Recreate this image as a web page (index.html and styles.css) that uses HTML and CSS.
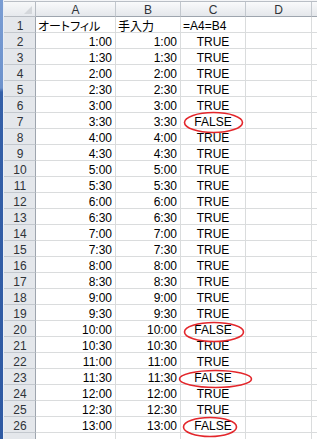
FILE: index.html
```html
<!DOCTYPE html>
<html lang="ja">
<head>
<meta charset="utf-8">
<link rel="stylesheet" href="styles.css">
</head>
<body>
<div class="window">
  <div class="frame"></div>
  <div class="sheet-area">
    <div class="topband"></div>
    <div class="sheet">
      <div class="corner"><span class="tri"></span></div>
      <div class="colhead">A</div>
      <div class="colhead">B</div>
      <div class="colhead">C</div>
      <div class="colhead">D</div>
      <div class="colhead last"></div>

      <div class="rowhead">1</div><div class="cell jp">オートフィル</div><div class="cell jp">手入力</div><div class="cell left">=A4=B4</div><div class="cell"></div><div class="cell"></div>
      <div class="rowhead">2</div><div class="cell num">1:00</div><div class="cell num">1:00</div><div class="cell mid">TRUE</div><div class="cell"></div><div class="cell"></div>
      <div class="rowhead">3</div><div class="cell num">1:30</div><div class="cell num">1:30</div><div class="cell mid">TRUE</div><div class="cell"></div><div class="cell"></div>
      <div class="rowhead">4</div><div class="cell num">2:00</div><div class="cell num">2:00</div><div class="cell mid">TRUE</div><div class="cell"></div><div class="cell"></div>
      <div class="rowhead">5</div><div class="cell num">2:30</div><div class="cell num">2:30</div><div class="cell mid">TRUE</div><div class="cell"></div><div class="cell"></div>
      <div class="rowhead">6</div><div class="cell num">3:00</div><div class="cell num">3:00</div><div class="cell mid">TRUE</div><div class="cell"></div><div class="cell"></div>
      <div class="rowhead">7</div><div class="cell num">3:30</div><div class="cell num">3:30</div><div class="cell mid">FALSE</div><div class="cell"></div><div class="cell"></div>
      <div class="rowhead">8</div><div class="cell num">4:00</div><div class="cell num">4:00</div><div class="cell mid">TRUE</div><div class="cell"></div><div class="cell"></div>
      <div class="rowhead">9</div><div class="cell num">4:30</div><div class="cell num">4:30</div><div class="cell mid">TRUE</div><div class="cell"></div><div class="cell"></div>
      <div class="rowhead">10</div><div class="cell num">5:00</div><div class="cell num">5:00</div><div class="cell mid">TRUE</div><div class="cell"></div><div class="cell"></div>
      <div class="rowhead">11</div><div class="cell num">5:30</div><div class="cell num">5:30</div><div class="cell mid">TRUE</div><div class="cell"></div><div class="cell"></div>
      <div class="rowhead">12</div><div class="cell num">6:00</div><div class="cell num">6:00</div><div class="cell mid">TRUE</div><div class="cell"></div><div class="cell"></div>
      <div class="rowhead">13</div><div class="cell num">6:30</div><div class="cell num">6:30</div><div class="cell mid">TRUE</div><div class="cell"></div><div class="cell"></div>
      <div class="rowhead">14</div><div class="cell num">7:00</div><div class="cell num">7:00</div><div class="cell mid">TRUE</div><div class="cell"></div><div class="cell"></div>
      <div class="rowhead">15</div><div class="cell num">7:30</div><div class="cell num">7:30</div><div class="cell mid">TRUE</div><div class="cell"></div><div class="cell"></div>
      <div class="rowhead">16</div><div class="cell num">8:00</div><div class="cell num">8:00</div><div class="cell mid">TRUE</div><div class="cell"></div><div class="cell"></div>
      <div class="rowhead">17</div><div class="cell num">8:30</div><div class="cell num">8:30</div><div class="cell mid">TRUE</div><div class="cell"></div><div class="cell"></div>
      <div class="rowhead">18</div><div class="cell num">9:00</div><div class="cell num">9:00</div><div class="cell mid">TRUE</div><div class="cell"></div><div class="cell"></div>
      <div class="rowhead">19</div><div class="cell num">9:30</div><div class="cell num">9:30</div><div class="cell mid">TRUE</div><div class="cell"></div><div class="cell"></div>
      <div class="rowhead">20</div><div class="cell num">10:00</div><div class="cell num">10:00</div><div class="cell mid">FALSE</div><div class="cell"></div><div class="cell"></div>
      <div class="rowhead">21</div><div class="cell num">10:30</div><div class="cell num">10:30</div><div class="cell mid">TRUE</div><div class="cell"></div><div class="cell"></div>
      <div class="rowhead">22</div><div class="cell num">11:00</div><div class="cell num">11:00</div><div class="cell mid">TRUE</div><div class="cell"></div><div class="cell"></div>
      <div class="rowhead">23</div><div class="cell num">11:30</div><div class="cell num">11:30</div><div class="cell mid">FALSE</div><div class="cell"></div><div class="cell"></div>
      <div class="rowhead">24</div><div class="cell num">12:00</div><div class="cell num">12:00</div><div class="cell mid">TRUE</div><div class="cell"></div><div class="cell"></div>
      <div class="rowhead">25</div><div class="cell num">12:30</div><div class="cell num">12:30</div><div class="cell mid">TRUE</div><div class="cell"></div><div class="cell"></div>
      <div class="rowhead">26</div><div class="cell num">13:00</div><div class="cell num">13:00</div><div class="cell mid">FALSE</div><div class="cell"></div><div class="cell"></div>
      <div class="rowhead"></div><div class="cell"></div><div class="cell"></div><div class="cell"></div><div class="cell"></div><div class="cell"></div>
    </div>
  </div>
  <svg class="marks" width="317" height="439" viewBox="0 0 317 439">
    <ellipse cx="213.5" cy="122.5" rx="29" ry="10"/>
    <ellipse cx="214" cy="332" rx="29.5" ry="9.5"/>
    <ellipse cx="215.5" cy="379" rx="36" ry="8.5"/>
    <ellipse cx="210" cy="427" rx="26.5" ry="9.5"/>
  </svg>
</div>
</body>
</html>
```

FILE: styles.css
```css
html, body {
  margin: 0;
  padding: 0;
  background: #ffffff;
  overflow: hidden;
}

.window {
  position: relative;
  display: flex;
  width: 317px;
  height: 439px;
  overflow: hidden;
}

.frame {
  flex: 0 0 3px;
  background: linear-gradient(to bottom, #7a9dd3 0px, #6d92cc 88px, #3560a8 92px, #2f5aa3 439px);
  border-right: 1px solid #e9eef5;
}

.sheet-area {
  flex: 1 1 auto;
  display: flex;
  flex-direction: column;
  min-width: 0;
}

.topband {
  height: 2px;
  flex: 0 0 2px;
  background: #f4f5f7;
  border-bottom: 1px solid #b9bec5;
  box-sizing: border-box;
}

.sheet {
  display: grid;
  grid-template-columns: 32px 80px 65px 65px 66px 40px;
  grid-template-rows: 15px;
  grid-auto-rows: 16px;
  font-family: "Liberation Sans", Arial, sans-serif;
  font-size: 12px;
  color: #000;
}

.sheet > div {
  box-sizing: border-box;
  overflow: hidden;
  white-space: nowrap;
}

.corner {
  position: relative;
  background: linear-gradient(to bottom, #f7f8f9, #e6e9ed);
  border-right: 1px solid #b6bbc2;
  border-bottom: 1px solid #b6bbc2;
}

.tri {
  position: absolute;
  right: 3px;
  bottom: 2px;
  width: 0;
  height: 0;
  border-left: 8px solid transparent;
  border-bottom: 8px solid #d4d7db;
}

.colhead {
  background: linear-gradient(to bottom, #f9fafb, #e4e7eb);
  border-right: 1px solid #c3c8ce;
  border-bottom: 1px solid #9ea5ae;
  color: #2f3338;
  text-align: center;
  line-height: 14px;
  padding-top: 1px;
  font-size: 12px;
}

.rowhead {
  background: #e4e7eb;
  border-right: 1px solid #9ea5ae;
  border-bottom: 1px solid #c3c8ce;
  color: #2f3338;
  text-align: center;
  line-height: 16px;
  padding-top: 1px;
  padding-left: 1px;
}

.cell {
  border-right: 1px solid #dadcdd;
  border-bottom: 1px solid #dadcdd;
  line-height: 16px;
  padding: 1px 2px 0 2px;
}

.num {
  text-align: right;
  padding-right: 3px;
}

.mid {
  text-align: center;
}

.left {
  text-align: left;
}

.jp {
  font-family: "Noto Sans CJK JP", sans-serif;
  font-feature-settings: "palt";
  font-size: 12px;
  line-height: 15px;
  padding-left: 2px;
}

.marks {
  position: absolute;
  left: 0;
  top: 0;
  pointer-events: none;
}

.marks ellipse {
  fill: none;
  stroke: #e3262b;
  stroke-width: 1.6;
}
```
